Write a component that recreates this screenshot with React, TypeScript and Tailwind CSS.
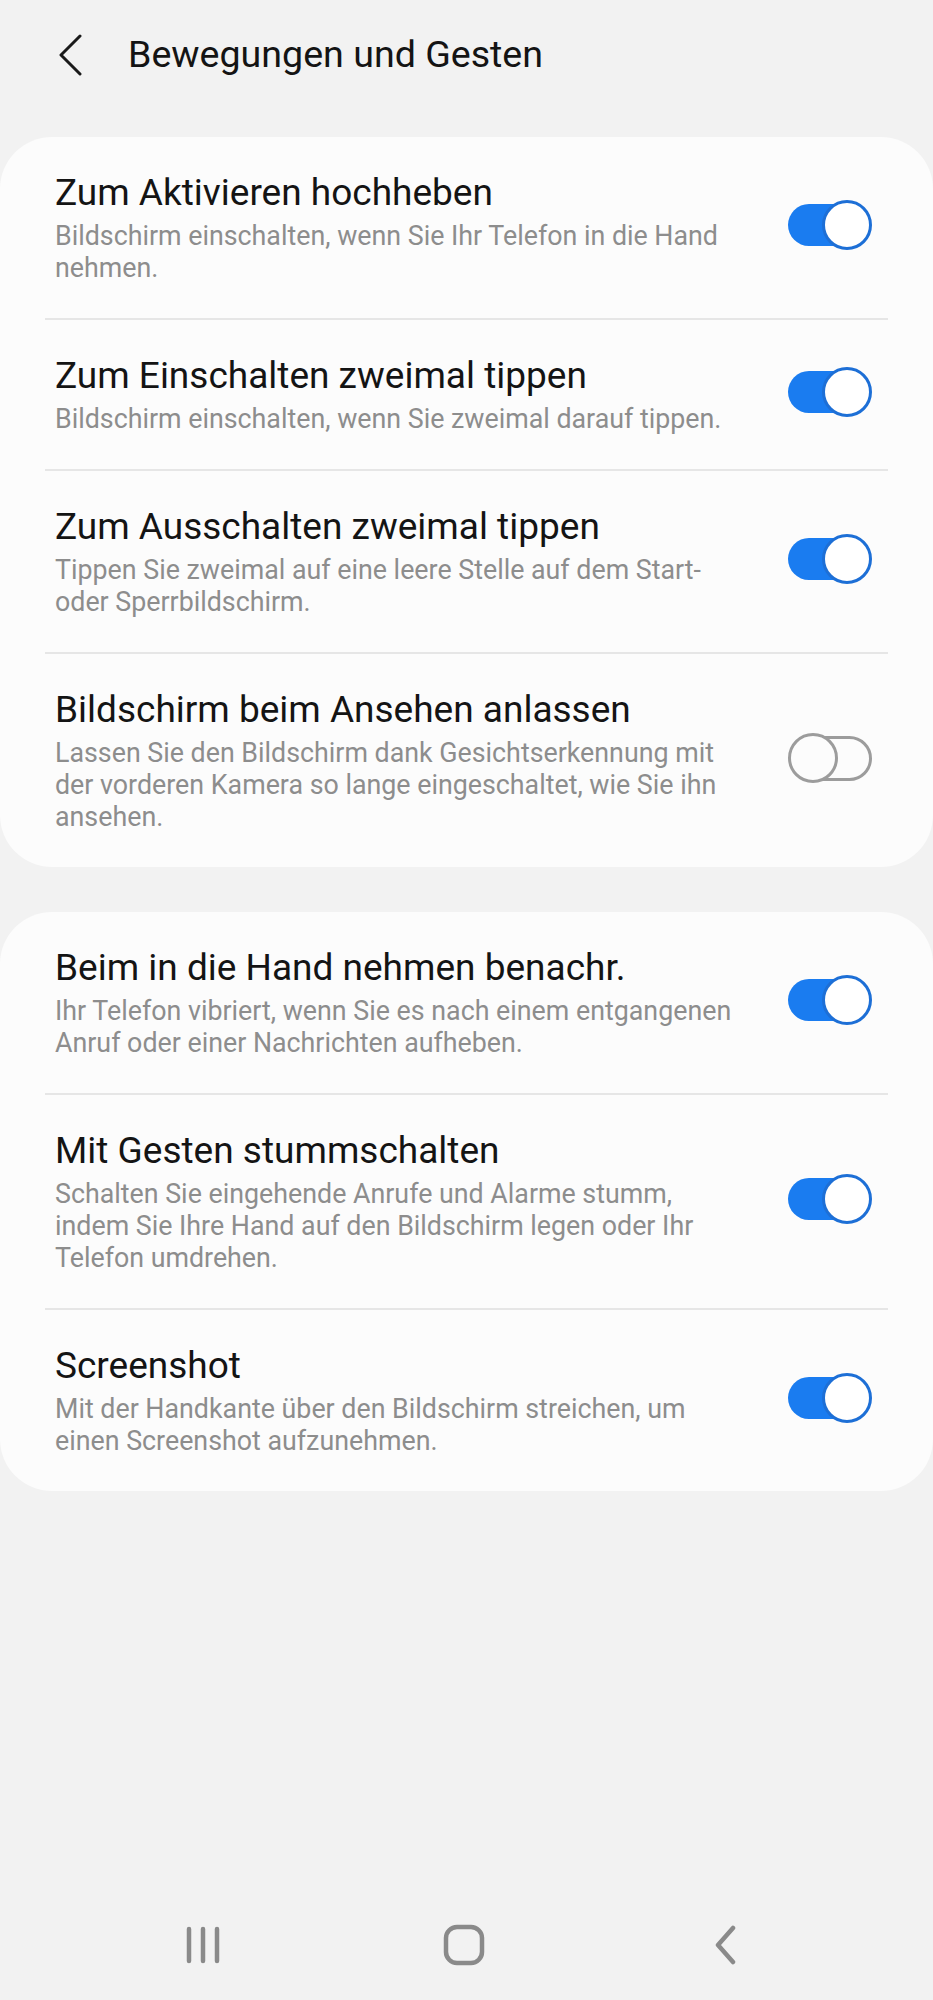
import React from "react";

type Item = { title: string; lines: string[]; on: boolean };

const card1: Item[] = [
  {
    title: "Zum Aktivieren hochheben",
    lines: ["Bildschirm einschalten, wenn Sie Ihr Telefon in die Hand", "nehmen."],
    on: true,
  },
  {
    title: "Zum Einschalten zweimal tippen",
    lines: ["Bildschirm einschalten, wenn Sie zweimal darauf tippen."],
    on: true,
  },
  {
    title: "Zum Ausschalten zweimal tippen",
    lines: ["Tippen Sie zweimal auf eine leere Stelle auf dem Start-", "oder Sperrbildschirm."],
    on: true,
  },
  {
    title: "Bildschirm beim Ansehen anlassen",
    lines: [
      "Lassen Sie den Bildschirm dank Gesichtserkennung mit",
      "der vorderen Kamera so lange eingeschaltet, wie Sie ihn",
      "ansehen.",
    ],
    on: false,
  },
];

const card2: Item[] = [
  {
    title: "Beim in die Hand nehmen benachr.",
    lines: ["Ihr Telefon vibriert, wenn Sie es nach einem entgangenen", "Anruf oder einer Nachrichten aufheben."],
    on: true,
  },
  {
    title: "Mit Gesten stummschalten",
    lines: [
      "Schalten Sie eingehende Anrufe und Alarme stumm,",
      "indem Sie Ihre Hand auf den Bildschirm legen oder Ihr",
      "Telefon umdrehen.",
    ],
    on: true,
  },
  {
    title: "Screenshot",
    lines: ["Mit der Handkante über den Bildschirm streichen, um", "einen Screenshot aufzunehmen."],
    on: true,
  },
];

function Toggle({ on }: { on: boolean }) {
  if (on) {
    return (
      <div className="relative w-[84px] h-[50px] shrink-0 mb-[5px]">
        <div className="absolute left-0 right-[6px] top-[4px] h-[42px] rounded-full bg-[#1a7cf0]" />
        <div className="absolute right-0 top-0 w-[50px] h-[50px] rounded-full bg-white border-[3px] border-[#1d6fd6]" />
      </div>
    );
  }
  return (
    <div className="relative w-[84px] h-[50px] shrink-0 mb-[5px]">
      <div className="absolute left-[6px] right-0 top-[3px] h-[45px] rounded-full border-[3px] border-[#9c9c9c]" />
      <div className="absolute left-0 top-0 w-[50px] h-[50px] rounded-full bg-[#fcfcfc] border-[3px] border-[#9c9c9c]" />
    </div>
  );
}

function Row({ item }: { item: Item }) {
  return (
    <div className="flex items-center pl-[55px] pr-[61px] py-[34px]">
      <div className="flex-1 min-w-0">
        <div className="text-[37px] leading-[44px] text-[#141414] whitespace-nowrap">{item.title}</div>
        <div className="mt-[5px] text-[26.8px] leading-[32px] text-[#8d8d8d]">
          {item.lines.map((l, i) => (
            <div key={i} className="whitespace-nowrap">
              {l}
            </div>
          ))}
        </div>
      </div>
      <Toggle on={item.on} />
    </div>
  );
}

function Card({ items }: { items: Item[] }) {
  return (
    <div className="bg-[#fcfcfc] rounded-[52px]">
      {items.map((it, i) => (
        <React.Fragment key={i}>
          {i > 0 && <div className="mx-[45px] h-[2px] bg-[#e6e6e6]" />}
          <Row item={it} />
        </React.Fragment>
      ))}
    </div>
  );
}

export default function App() {
  return (
    <div
      className="w-[933px] h-[2000px] bg-[#f2f2f2] flex flex-col"
      style={{ fontFamily: "Roboto, 'Noto Sans', sans-serif" }}
    >
      <div className="h-[110px] flex items-center shrink-0">
        <div className="w-[128px] flex justify-start pl-[56px]">
          <svg width="28" height="42" viewBox="0 0 28 42" fill="none">
            <path d="M24 2 L5 21 L24 40" stroke="#1a1a1a" strokeWidth="3" strokeLinecap="round" strokeLinejoin="round" />
          </svg>
        </div>
        <div className="text-[37.6px] text-[#141414] leading-none">Bewegungen und Gesten</div>
      </div>
      <div className="pt-[27px] flex flex-col gap-[45px]">
        <Card items={card1} />
        <Card items={card2} />
      </div>
      <div className="flex-1" />
      <div className="h-[110px] shrink-0 flex items-center justify-center pr-[6px]">
        <div className="w-[261px] flex justify-center">
          <svg width="40" height="40" viewBox="0 0 40 40">
            <path d="M6 4 V36 M20 4 V36 M34 4 V36" stroke="#8a8a8a" strokeWidth="4.5" strokeLinecap="round" />
          </svg>
        </div>
        <div className="w-[261px] flex justify-center">
          <svg width="42" height="42" viewBox="0 0 42 42">
            <rect x="3" y="3" width="36" height="36" rx="11" fill="none" stroke="#8a8a8a" strokeWidth="4.5" />
          </svg>
        </div>
        <div className="w-[261px] flex justify-center">
          <svg width="26" height="40" viewBox="0 0 26 40">
            <path d="M21 3 L6 20 L21 37" fill="none" stroke="#8a8a8a" strokeWidth="4.5" strokeLinecap="round" strokeLinejoin="round" />
          </svg>
        </div>
      </div>
    </div>
  );
}
